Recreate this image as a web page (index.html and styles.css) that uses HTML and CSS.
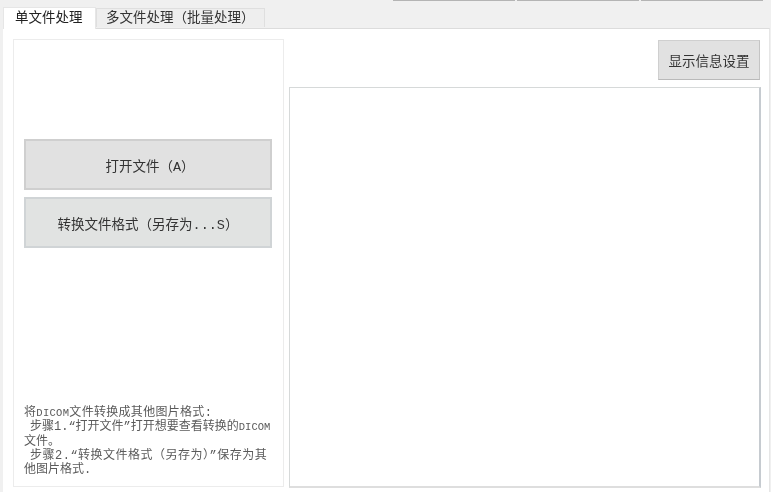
FILE: index.html
```html
<!DOCTYPE html>
<html lang="zh-CN">
<head>
  <meta charset="UTF-8" />
  <title>DICOM</title>
  <link rel="stylesheet" href="styles.css">
</head>
<body>
  <div class="strip-wrap">
    <div class="top-edges">
      <span class="edge"></span>
      <span class="edge"></span>
      <span class="edge"></span>
    </div>
    <div class="tabs">
      <div class="tab active"><span class="label">单文件处理</span></div>
      <div class="tab"><span class="label">多文件处理（批量处理）</span></div>
    </div>
  </div>

  <div class="pane">
    <div class="left-panel">
      <div class="btn-group">
        <div class="btn big open"><span class="label">打开文件（A）</span></div>
        <div class="btn big alt"><span class="label">转换文件格式（另存为...S）</span></div>
      </div>
      <div class="help">
        <div class="line lead">将<span class="latin">DICOM</span>文件转换成其他图片格式:</div>
        <div class="line step">步骤1.“打开文件”打开想要查看转换的<span class="latin">DICOM</span></div>
        <div class="line">文件。</div>
        <div class="line step spaced">步骤2.“转换文件格式（另存为）”保存为其</div>
        <div class="line">他图片格式.</div>
      </div>
    </div>
    <div class="right-panel">
      <div class="btn small"><span class="label">显示信息设置</span></div>
      <div class="viewer"></div>
    </div>
  </div>
</body>
</html>
```

FILE: styles.css
```css
html, body {
  margin: 0;
  padding: 0;
  height: 100%;
  overflow: hidden;
  background: #f0f0f0;
  color: #333;
  font-family: "Liberation Mono", "Noto Sans CJK SC", monospace;
}

body {
  display: flex;
  flex-direction: column;
  padding: 0 1px 0 3px;
  box-sizing: border-box;
}

.label {
  display: inline-block;
  filter: blur(0.5px);
}

.strip-wrap {
  height: 28px;
  flex: none;
  display: flex;
  flex-direction: column;
  justify-content: flex-end;
  position: relative;
}

.top-edges {
  position: absolute;
  top: 0;
  left: 390px;
  display: flex;
  gap: 2px;
}

.edge {
  width: 122px;
  height: 1px;
  background: #b4b4b4;
}

.tabs {
  display: flex;
  align-items: flex-end;
}

.tab {
  width: 169px;
  height: 19px;
  box-sizing: border-box;
  background: #eeeeee;
  border: 1px solid #dfdfdf;
  border-bottom: none;
  font-size: 13.5px;
  line-height: 20px;
  padding-left: 9px;
  margin-bottom: 1px;
}

.tab.active {
  width: 93px;
  height: 22px;
  margin-bottom: -1px;
  padding-left: 11px;
  background: #fff;
  border-color: #e6e6e6;
  line-height: 21px;
  color: #222;
  z-index: 1;
}

.pane {
  flex: 1;
  background: #fff;
  border-top: 1px solid #dcdcdc;
  border-right: 1px solid #e6e6e6;
  display: flex;
  gap: 5px;
  padding: 10px 8px 4px 10px;
  min-height: 0;
}

.left-panel {
  width: 271px;
  margin-bottom: 1px;
  box-sizing: border-box;
  border: 1px solid #ececec;
  padding: 99px 11px 0 10px;
  display: flex;
  flex-direction: column;
  justify-content: space-between;
}

.btn-group {
  display: flex;
  flex-direction: column;
  gap: 7px;
}

.btn {
  box-sizing: border-box;
  background: #e1e1e1;
  border: 1px solid #cfcfcf;
  display: flex;
  align-items: center;
  justify-content: center;
  font-size: 13.5px;
  color: #333;
}

.btn.big {
  height: 51px;
  border-width: 2px;
}

.btn.open {
  padding-left: 4px;
}

.btn.alt {
  background: #e1e3e2;
  border-color: #d0d4d6;
}

.help {
  font-size: 12px;
  line-height: 14.3px;
  height: 72px;
  color: #5a5a5a;
  white-space: nowrap;
  filter: blur(0.6px);
  margin: 0 -3px 8px 0;
}

.help .latin {
  font-size: 10.5px;
}

.help .lead {
  letter-spacing: 0.3px;
}

.help .spaced {
  letter-spacing: 0.5px;
}

.help .step {
  padding-left: 6px;
}

.right-panel {
  flex: 1;
  display: flex;
  flex-direction: column;
  align-items: flex-end;
  gap: 7px;
}

.btn.small {
  width: 102px;
  height: 40px;
  margin-top: 1px;
  border-bottom-color: #b9b9b9;
  border-right-color: #c4c4c4;
  margin-right: 1px;
}

.viewer {
  align-self: stretch;
  flex: 1;
  background: #fff;
  border: 1px solid #d6d9d9;
  border-right: 2px solid #c6cbd0;
  border-bottom: 2px solid #dedede;
}
```
